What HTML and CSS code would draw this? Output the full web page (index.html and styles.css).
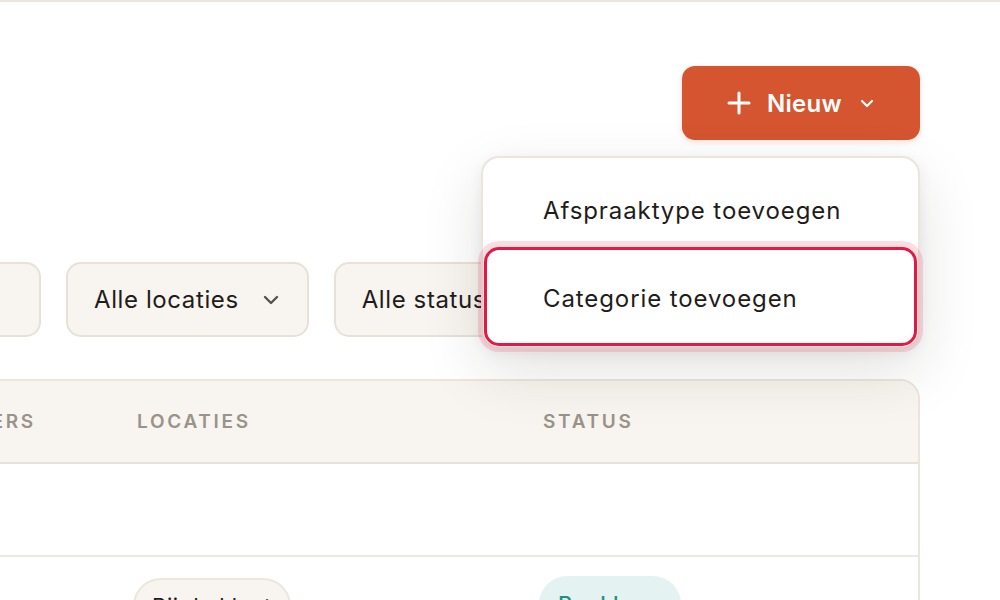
FILE: index.html
```html
<!DOCTYPE html>
<html lang="nl">
<head>
<meta charset="utf-8">
<title>Afspraaktypes</title>
<link rel="stylesheet" href="styles.css">
</head>
<body>
<main class="page">
  <header class="toolbar">
    <div class="new-wrap">
      <button class="btn-new" type="button">
        <svg class="plus" viewBox="0 0 24 24" width="24" height="24" aria-hidden="true"><path d="M12 2v20M2 12h20" fill="none" stroke="#fff" stroke-width="3" stroke-linecap="round"/></svg>
        <span>Nieuw</span>
        <svg class="chev-small" viewBox="0 0 14 9" width="14" height="9" aria-hidden="true"><path d="M2 2l5 5 5-5" fill="none" stroke="#fff" stroke-width="2.2" stroke-linecap="round" stroke-linejoin="round"/></svg>
      </button>
      <div class="menu" role="menu">
        <div class="menu-item" role="menuitem">Afspraaktype toevoegen</div>
        <div class="menu-item active" role="menuitem">Categorie toevoegen</div>
      </div>
    </div>
  </header>

  <div class="filters">
    <div class="filter search">Zoeken…</div>
    <div class="filter">Alle locaties
      <svg class="chev" viewBox="0 0 16 10" width="16" height="10" aria-hidden="true"><path d="M2 2l6 6 6-6" fill="none" stroke="#57524c" stroke-width="2.4" stroke-linecap="round" stroke-linejoin="round"/></svg>
    </div>
    <div class="filter">Alle statussen
      <svg class="chev" viewBox="0 0 16 10" width="16" height="10" aria-hidden="true"><path d="M2 2l6 6 6-6" fill="none" stroke="#57524c" stroke-width="2.4" stroke-linecap="round" stroke-linejoin="round"/></svg>
    </div>
  </div>

  <div class="table">
    <div class="row head">
      <div class="cell">Naam</div>
      <div class="cell">Medewerkers</div>
      <div class="cell">Locaties</div>
      <div class="cell">Status</div>
    </div>
    <div class="row group">
      <div class="cell">Behandelingen</div>
      <div class="cell"></div>
      <div class="cell"></div>
      <div class="cell"></div>
    </div>
    <div class="row">
      <div class="cell">Intake</div>
      <div class="cell">Alle</div>
      <div class="cell"><span class="pill loc">Bij de klant</span></div>
      <div class="cell"><span class="pill ok">Boekbaar</span></div>
    </div>
  </div>
</main>
</body>
</html>
```

FILE: styles.css
```css
* { box-sizing: border-box; }

html, body {
  margin: 0;
  padding: 0;
  background: #ffffff;
  overflow: hidden;
}

body {
  width: 1000px;
  height: 600px;
  font-family: "Inter", "Noto Sans", sans-serif;
  color: #1f1c19;
}

.page {
  border-top: 2px solid #ece6de;
  padding-top: 64px;
  padding-right: 80px;
}

.toolbar {
  display: flex;
  justify-content: flex-end;
}

.new-wrap {
  position: relative;
}

.btn-new {
  display: flex;
  align-items: center;
  width: 238px;
  height: 74px;
  padding: 0 0 0 45px;
  border: 0;
  border-radius: 13px;
  background: #d4552f;
  color: #ffffff;
  font-family: inherit;
  font-size: 24px;
  font-weight: 600;
  letter-spacing: 0.3px;
  box-shadow: 0 2px 6px rgba(212, 85, 47, 0.18);
}

.btn-new .plus { margin-right: 16px; }
.btn-new .chev-small { margin-left: 18px; }

.menu {
  position: absolute;
  top: 90px;
  right: 0;
  width: 439px;
  padding: 1px;
  background: #ffffff;
  border: 2px solid #ebe5dc;
  border-radius: 18px;
  box-shadow: 0 22px 60px rgba(40, 30, 20, 0.13), 0 4px 14px rgba(40, 30, 20, 0.06);
  z-index: 5;
}

.menu-item {
  display: flex;
  align-items: center;
  height: 88px;
  padding-left: 59px;
  padding-top: 14px;
  font-size: 24px;
  font-weight: 400;
  letter-spacing: 0.9px;
  color: #1f1c19;
}

.menu-item.active {
  height: 99px;
  padding-left: 56px;
  padding-top: 3px;
  border: 3px solid #e01a43;
  border-radius: 15px;
  box-shadow: 0 0 0 6px rgba(224, 26, 67, 0.15);
}

.filters {
  display: flex;
  gap: 25px;
  margin-top: 122px;
  margin-left: -219px;
}

.filter {
  display: flex;
  align-items: center;
  height: 75px;
  padding: 0 28px 0 26px;
  background: #f8f5f0;
  border: 2px solid #e8e1d7;
  border-radius: 15px;
  font-size: 24px;
  font-weight: 400;
  letter-spacing: 0.6px;
  color: #1f1c19;
  white-space: nowrap;
}

.filter.search {
  width: 260px;
  color: #9a938a;
}

.filter .chev { margin-left: 24px; }

.table {
  width: 1342px;
  margin-left: -422px;
  margin-top: 42px;
  border: 2px solid #ebe5dd;
  border-radius: 20px 20px 0 0;
  overflow: hidden;
}

.row {
  display: grid;
  grid-template-columns: 265px 268px 406px 1fr;
  align-items: center;
  border-bottom: 2px solid #eee8e1;
  height: 93px;
}

.row .cell {
  padding-left: 24px;
  font-size: 22px;
  white-space: nowrap;
}

.row.head {
  height: 83px;
  background: #f8f5f0;
  border-bottom: 2px solid #e8e1d8;
}

.row.head .cell {
  font-size: 19px;
  font-weight: 600;
  letter-spacing: 2.7px;
  text-transform: uppercase;
  color: #9a938a;
}

.row.head .cell:nth-child(2) { padding-left: 14px; }

.row:last-child {
  align-items: start;
  padding-top: 21px;
  height: 120px;
}

.pill {
  display: inline-flex;
  align-items: center;
  height: 56px;
  padding: 0 17px;
  border-radius: 28px;
  font-size: 22px;
  font-weight: 400;
  letter-spacing: 0.5px;
}

.pill.loc {
  margin-left: -4px;
  background: #f8f5f0;
  border: 2px solid #ece6dd;
  color: #1f1c19;
}

.pill.ok {
  margin-left: -4px;
  margin-top: -2px;
  padding: 0 19px;
  background: #e4f3f1;
  color: #17967f;
  font-weight: 500;
}
```
